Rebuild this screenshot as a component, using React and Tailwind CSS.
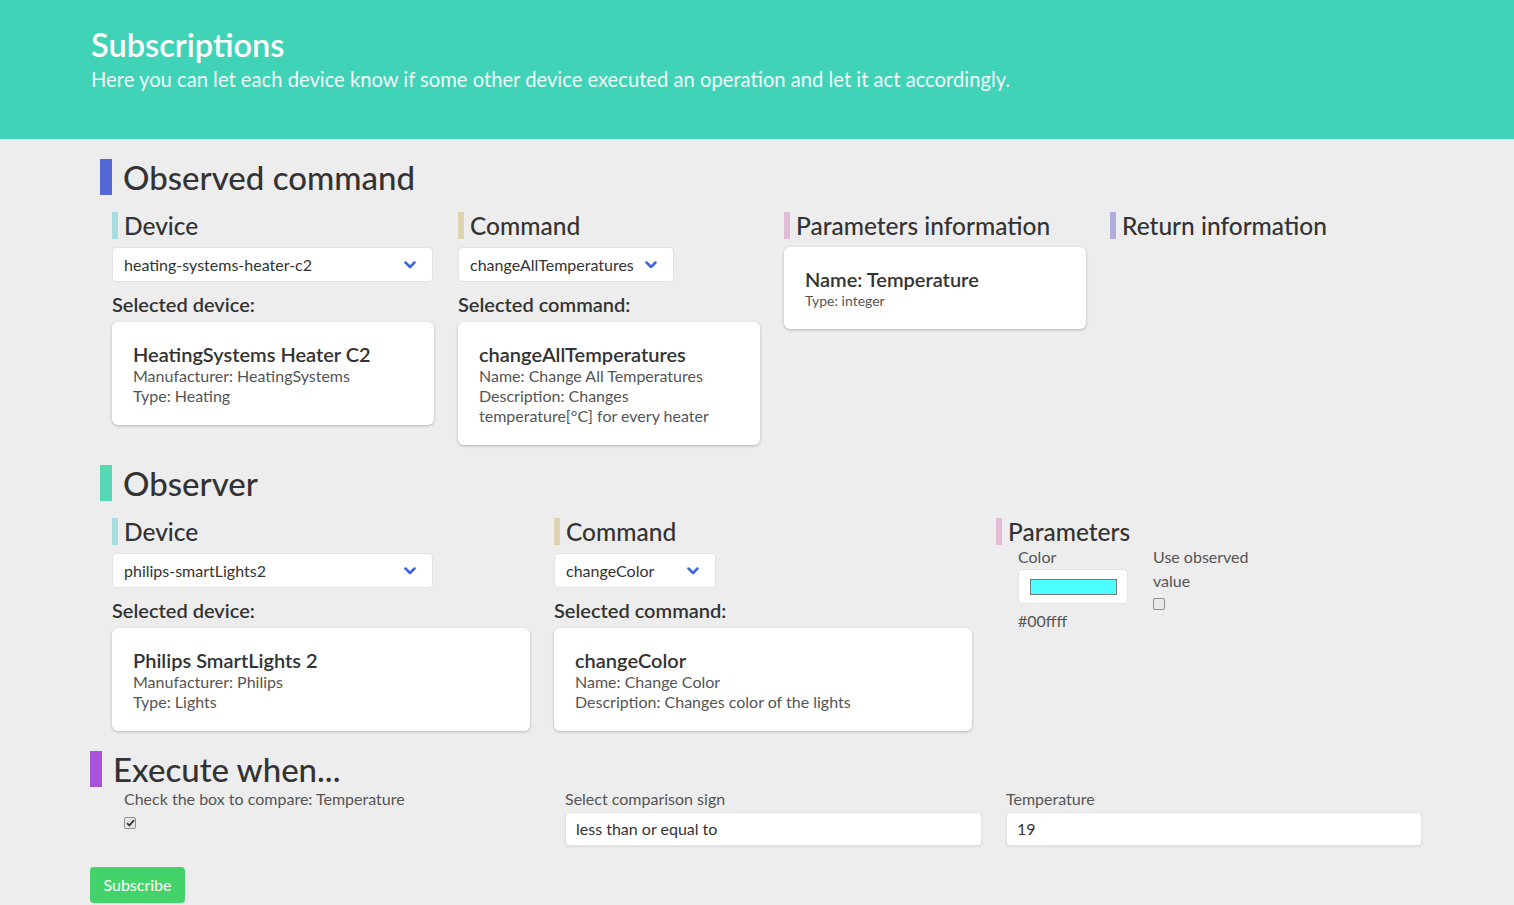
import React from "react";

const FONT = { fontFamily: "Lato, 'Noto Sans', sans-serif" };

function Chevron() {
  return (
    <svg width="12" height="8" viewBox="0 0 12 8" fill="none">
      <path d="M1.5 1.5 L6 6 L10.5 1.5" stroke="#3b66e0" strokeWidth="2.5" strokeLinecap="round" strokeLinejoin="round" />
    </svg>
  );
}

function SectionHeading({ color, children }) {
  return (
    <div className="flex h-[36px] items-center gap-[11px]">
      <span className={`h-[36px] w-[12px] ${color}`} />
      <h2 className="text-[33px] font-medium leading-[36px] text-[#333]">{children}</h2>
    </div>
  );
}

function SubHeading({ color, children }) {
  return (
    <div className="flex h-[27px] items-center gap-[6px]">
      <span className={`h-[27px] w-[6px] ${color}`} />
      <h3 className="text-[24.5px] font-medium leading-[27px] text-[#333]">{children}</h3>
    </div>
  );
}

function Select({ value, width }) {
  return (
    <div className={`mt-[8px] flex h-[35px] items-center justify-between rounded-[4px] border border-[#e2e2e2] bg-white pl-[11px] pr-[16px] ${width}`}>
      <span className="text-[16px] text-[#333]">{value}</span>
      <Chevron />
    </div>
  );
}

function Card({ title, lines, className = "" }) {
  return (
    <div className={`rounded-[6px] bg-white pb-[19px] pl-[21px] pr-[20px] pt-[20px] shadow-[0_1px_3px_rgba(0,0,0,0.25)] ${className}`}>
      <p className="text-[20px] font-semibold leading-[24px] text-[#333]">{title}</p>
      {lines.map((l, i) => (
        <p key={i} className="text-[16px] leading-[20px] text-[#555]">{l}</p>
      ))}
    </div>
  );
}

function Label({ children }) {
  return <p className="mt-[10px] text-[20px] font-semibold leading-[24px] text-[#333]">{children}</p>;
}

function Checkbox({ checked }) {
  return (
    <span className="flex h-[12px] w-[12px] items-center justify-center rounded-[2px] border border-[#8f8f8f] bg-[#e8e8e8]">
      {checked && (
        <svg width="9" height="8" viewBox="0 0 9 8">
          <path d="M1 4.2 L3.4 6.5 L8 1.2" stroke="#333" strokeWidth="1.8" fill="none" />
        </svg>
      )}
    </span>
  );
}

export default function App() {
  return (
    <div className="min-h-screen bg-[#ededed] pb-[2px]" style={FONT}>
      {/* Header */}
      <header className="h-[139px] bg-[#41d3b7] pl-[91px] pt-[26px]">
        <h1 className="text-[32.5px] font-semibold leading-[38px] text-white">Subscriptions</h1>
        <p className="mt-[3px] text-[20.2px] leading-[24px] text-[#effaf7]">
          Here you can let each device know if some other device executed an operation and let it act accordingly.
        </p>
      </header>

      {/* Observed command */}
      <section className="mt-[20px] pl-[100px]">
        <SectionHeading color="bg-[#5469d8]">Observed command</SectionHeading>
        <div className="mt-[17px] flex items-start gap-[24px] pl-[12px]">
          <div className="w-[322px]">
            <SubHeading color="bg-[#a8dcdf]">Device</SubHeading>
            <Select value="heating-systems-heater-c2" width="w-[321px]" />
            <Label>Selected device:</Label>
            <Card
              className="mt-[6px]"
              title="HeatingSystems Heater C2"
              lines={["Manufacturer: HeatingSystems", "Type: Heating"]}
            />
          </div>
          <div className="w-[302px]">
            <SubHeading color="bg-[#ddd3ae]">Command</SubHeading>
            <Select value="changeAllTemperatures" width="w-[216px]" />
            <Label>Selected command:</Label>
            <Card
              className="mt-[6px]"
              title="changeAllTemperatures"
              lines={["Name: Change All Temperatures", "Description: Changes temperature[°C] for every heater"]}
            />
          </div>
          <div className="w-[302px]">
            <SubHeading color="bg-[#e0bcd7]">Parameters information</SubHeading>
            <div className="mt-[8px] rounded-[6px] bg-white pb-[18px] pl-[21px] pr-[20px] pt-[20px] shadow-[0_1px_3px_rgba(0,0,0,0.25)]">
              <p className="text-[20px] font-semibold leading-[24px] text-[#333]">Name: Temperature</p>
              <p className="text-[14px] leading-[20px] text-[#555]">Type: integer</p>
            </div>
          </div>
          <div>
            <SubHeading color="bg-[#aeaddd]">Return information</SubHeading>
          </div>
        </div>
      </section>

      {/* Observer */}
      <section className="mt-[20px] pl-[100px]">
        <SectionHeading color="bg-[#56d8b5]">Observer</SectionHeading>
        <div className="mt-[17px] flex items-start gap-[24px] pl-[12px]">
          <div className="w-[418px]">
            <SubHeading color="bg-[#a8dcdf]">Device</SubHeading>
            <Select value="philips-smartLights2" width="w-[321px]" />
            <Label>Selected device:</Label>
            <Card
              className="mt-[6px]"
              title="Philips SmartLights 2"
              lines={["Manufacturer: Philips", "Type: Lights"]}
            />
          </div>
          <div className="w-[418px]">
            <SubHeading color="bg-[#ddd3ae]">Command</SubHeading>
            <Select value="changeColor" width="w-[162px]" />
            <Label>Selected command:</Label>
            <Card
              className="mt-[6px]"
              title="changeColor"
              lines={["Name: Change Color", "Description: Changes color of the lights"]}
            />
          </div>
          <div>
            <SubHeading color="bg-[#e0bcd7]">Parameters</SubHeading>
            <div className="flex gap-[25px] pl-[22px]">
              <div className="w-[110px]">
                <p className="text-[16px] leading-[24px] text-[#555]">Color</p>
                <div className="flex h-[35px] w-[110px] items-center justify-center rounded-[4px] border border-[#e2e2e2] bg-white">
                  <span className="h-[16px] w-[87px] border border-[#777] bg-[#4dffff]" />
                </div>
                <p className="mt-[5px] text-[16px] leading-[24px] text-[#555]">#00ffff</p>
              </div>
              <div className="w-[104px]">
                <p className="text-[16px] leading-[24px] text-[#555]">Use observed value</p>
                <div className="mt-[5px]">
                  <Checkbox />
                </div>
              </div>
            </div>
          </div>
        </div>
      </section>

      {/* Execute when */}
      <section className="mt-[20px] pl-[90px]">
        <SectionHeading color="bg-[#a652d9]">Execute when...</SectionHeading>
        <div className="grid grid-cols-[417px_417px_416px] gap-x-[24px] pl-[34px]">
          <div>
            <p className="text-[16px] leading-[24px] text-[#555]">Check the box to compare: Temperature</p>
            <div className="mt-[6px]">
              <Checkbox checked />
            </div>
          </div>
          <div>
            <p className="text-[16px] leading-[24px] text-[#555]">Select comparison sign</p>
            <div className="mt-[1px] flex h-[34px] items-center rounded-[4px] border border-[#e2e2e2] bg-white pl-[10px] shadow-[0_1px_2px_rgba(0,0,0,0.08)]">
              <span className="text-[16px] text-[#333]">less than or equal to</span>
            </div>
          </div>
          <div>
            <p className="text-[16px] leading-[24px] text-[#555]">Temperature</p>
            <div className="mt-[1px] flex h-[34px] items-center rounded-[4px] border border-[#e2e2e2] bg-white pl-[10px] shadow-[0_1px_2px_rgba(0,0,0,0.08)]">
              <span className="text-[16px] text-[#333]">19</span>
            </div>
          </div>
        </div>
        <button className="mt-[21px] flex h-[36px] w-[95px] items-center justify-center rounded-[4px] bg-[#43d36a] text-[16px] text-white">
          Subscribe
        </button>
      </section>
    </div>
  );
}
